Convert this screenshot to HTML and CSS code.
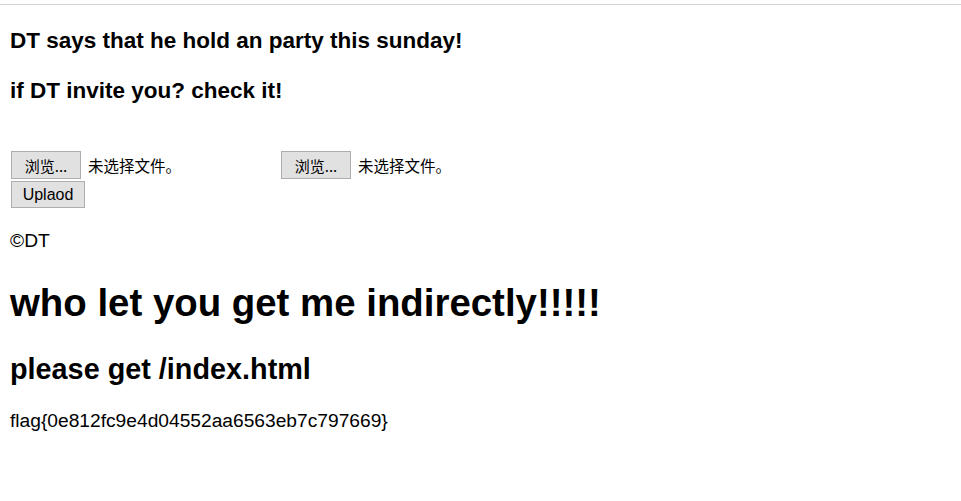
FILE: index.html
```html
<!DOCTYPE html>
<html lang="zh">
<head>
<meta charset="utf-8">
<title>DT party</title>
<link rel="stylesheet" href="styles.css">
</head>
<body>
<div class="topbar"></div>
<main class="page">
  <h3 class="lead">DT says that he hold an party this sunday!</h3>
  <h3 class="lead">if DT invite you? check it!</h3>
  <form class="upload">
    <div class="files">
      <span class="file"><button type="button" class="btn browse">浏览...</button><span class="fname">未选择文件。</span></span>
      <span class="file"><button type="button" class="btn browse">浏览...</button><span class="fname">未选择文件。</span></span>
    </div>
    <button type="button" class="btn submit">Uplaod</button>
  </form>
  <p class="copy">©DT</p>
  <h1 class="big">who let you get me indirectly!!!!!</h1>
  <h2 class="sub">please get /index.html</h2>
  <p class="flag">flag{0e812fc9e4d04552aa6563eb7c797669}</p>
</main>
</body>
</html>
```
FILE: styles.css
```css
html, body {
  margin: 0;
  padding: 0;
  background: #ffffff;
}
body {
  font-family: "Liberation Sans", Arial, sans-serif;
  color: #000000;
}
.topbar {
  height: 4px;
  border-bottom: 1px solid #d2d2d2;
}
.page {
  padding: 0 10px;
  display: flow-root;
}
.lead {
  font-size: 22.5px;
  line-height: 26px;
  font-weight: bold;
  margin: 22.5px 0 24.5px;
}
.upload {
  margin: 0;
  padding-top: 22.5px;
  display: flex;
  flex-direction: column;
  align-items: flex-start;
  gap: 2px;
}
.files {
  display: flex;
}
.file {
  display: flex;
  align-items: center;
  width: 270px;
}
.btn {
  font-family: "Liberation Sans", "Noto Sans CJK SC", sans-serif;
  font-size: 16px;
  color: #000;
  background: #e1e1e1;
  border: 1px solid #adadad;
  border-radius: 0;
  margin: 0 0 0 1px;
  box-sizing: border-box;
}
.browse {
  height: 28px;
  width: 70px;
  padding: 0;
  font-family: "Noto Sans CJK SC", "Liberation Sans", sans-serif;
  font-size: 15px;
}
.submit {
  height: 27px;
  width: 74px;
  padding: 0;
}
.fname {
  font-family: "Noto Sans CJK SC", sans-serif;
  font-size: 15.5px;
  margin-left: 7px;
}
.copy {
  font-size: 19.2px;
  line-height: 22px;
  margin: 22px 0 0;
}
.big {
  font-size: 38.4px;
  line-height: 44px;
  font-weight: bold;
  margin: 28.7px 0 0;
}
.sub {
  font-size: 28.8px;
  line-height: 33px;
  font-weight: bold;
  margin: 28.7px 0 0;
}
.flag {
  font-size: 19.2px;
  line-height: 22px;
  margin: 24px 0 0;
}
```
